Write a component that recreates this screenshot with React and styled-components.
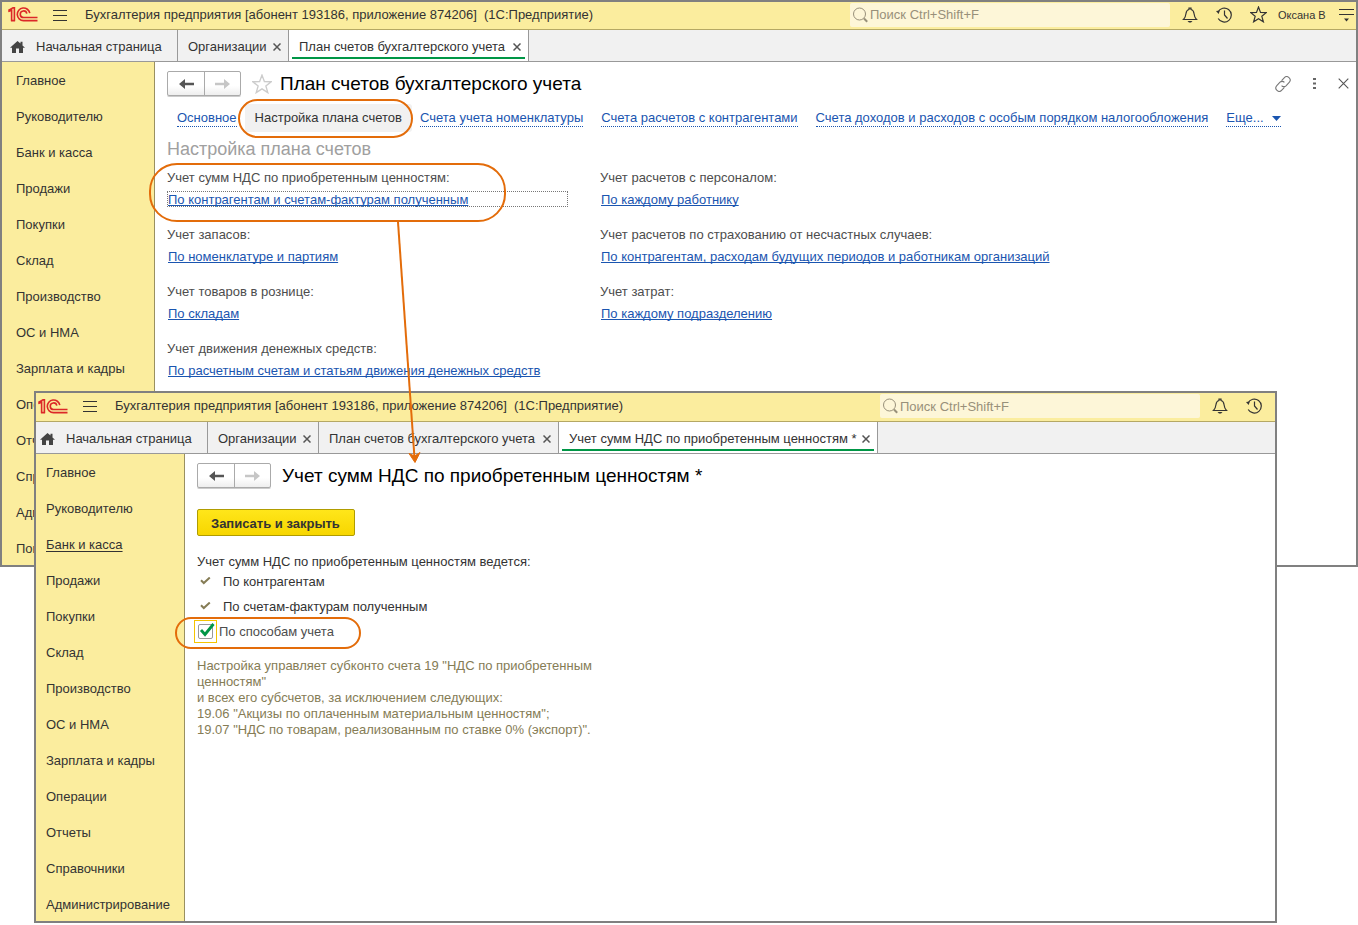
import React from "react";
import styled, { createGlobalStyle } from "styled-components";

const GlobalStyle = createGlobalStyle`
  *, *::before, *::after { box-sizing: border-box; }
  body {
    margin: 0;
    background: #fff;
    color: #333;
    font: 13px/16px "Liberation Sans", Arial, sans-serif;
  }
  button, input { font: inherit; color: inherit; }
  svg { display: block; flex: none; }
`;

const Desktop = styled.div`
  position: relative;
  min-height: 100vh;
  overflow: hidden;
`;

const Frame = styled.section`
  border: 2px solid #808080;
  background: #fff;
  ${(p) =>
    p.$front &&
    `
    position: absolute;
    top: 391px;
    left: 34px;
    right: 81px;
  `}
`;

const TitleBar = styled.header`
  display: flex;
  align-items: center;
  height: ${(p) => (p.$front ? 29 : 28)}px;
  padding: 0 ${(p) => (p.$front ? 4 : 2)}px 2px ${(p) => (p.$front ? 2 : 6)}px;
  background: #fbed9e;
  border-bottom: 1px solid #b5a864;
`;

const IconButton = styled.button`
  display: flex;
  align-items: center;
  justify-content: center;
  flex: none;
  width: ${(p) => p.$w || 34}px;
  height: 24px;
  padding: 0;
  border: 0;
  background: none;
  color: #333;
  cursor: pointer;
`;

const AppName = styled.div`
  margin-left: 3px;
  white-space: pre;
`;

const Search = styled.label`
  display: flex;
  align-items: center;
  gap: 2px;
  width: 320px;
  height: 24px;
  margin: 0 3px 0 auto;
  padding-left: 3px;
  border-radius: 2px;
  background: #fdf6d8;
  color: #98907a;
`;

const SearchInput = styled.input`
  flex: 1;
  min-width: 0;
  height: 22px;
  padding: 0;
  border: 0;
  outline: 0;
  background: none;
  &::placeholder { color: #98907a; opacity: 1; }
`;

const User = styled.button`
  width: 64px;
  padding: 0 0 0 3px;
  border: 0;
  background: none;
  font-size: 11px;
  text-align: left;
  white-space: nowrap;
`;

const TabBar = styled.nav`
  display: flex;
  height: 32px;
  background: #f1f1f1;
  border-bottom: 1px solid #999;
`;

const Tab = styled.div`
  position: relative;
  display: flex;
  align-items: center;
  justify-content: space-between;
  flex: none;
  width: ${(p) => p.$w}px;
  padding: 2px 6px 0 ${(p) => p.$pad || 10}px;
  border-right: 1px solid #999;
  background: ${(p) => (p.$active ? "#fff" : "none")};
  &::after {
    content: "";
    display: ${(p) => (p.$active ? "block" : "none")};
    position: absolute;
    left: 3px;
    right: 3px;
    bottom: 2px;
    height: 2px;
    background: #009646;
  }
`;

const TabLabel = styled.button`
  display: flex;
  align-items: center;
  gap: 11px;
  padding: 0;
  border: 0;
  background: none;
  white-space: nowrap;
  cursor: pointer;
`;

const CloseButton = styled(TabLabel)`
  width: 11px;
  height: 16px;
  justify-content: center;
`;

const Body = styled.div`
  display: flex;
`;

const Sidebar = styled.nav`
  flex: none;
  width: ${(p) => (p.$front ? 149 : 153)}px;
  border-right: 1px solid #9a9060;
  background: #fbed9e;
`;

const Sections = styled.ul`
  margin: 0 0 -1px;
  padding: 0 0 0 ${(p) => (p.$front ? 10 : 14)}px;
  list-style: none;
`;

const Section = styled.li`
  display: flex;
  align-items: center;
  height: 36px;
  padding-top: 2px;
  a {
    color: #333;
    text-decoration: ${(p) => (p.$hover ? "underline" : "none")};
    text-decoration-skip-ink: none;
    text-underline-offset: 2px;
    white-space: nowrap;
  }
`;

const Main = styled.main`
  flex: 1;
  min-width: 0;
  padding: 9px 7px 0 12px;
`;

const Heading = styled.div`
  display: flex;
  align-items: center;
  height: 25px;
`;

const History = styled.div`
  display: flex;
  flex: none;
  height: 25px;
  border: 1px solid #aaa;
  border-radius: 2px;
  background: linear-gradient(#fff 60%, #eee);
  box-shadow: 0 1px 0 #ccc;
`;

const HistoryButton = styled.button`
  display: flex;
  align-items: center;
  justify-content: center;
  width: ${(p) => (p.$back ? 37 : 35)}px;
  padding: 0;
  border: 0;
  border-right: ${(p) => (p.$back ? "1px solid #aaa" : "0")};
  background: none;
  color: ${(p) => (p.$back ? "#555" : "#c6c6c6")};
`;

const Favorite = styled(IconButton)`
  width: 39px;
  padding-left: 2px;
`;

const Title = styled.h1`
  margin: 0 0 0 ${(p) => (p.$front ? 11 : 0)}px;
  color: #000;
  font-size: 19px;
  line-height: 24px;
  font-weight: 400;
  white-space: nowrap;
`;

const Tools = styled.div`
  display: flex;
  align-items: center;
  gap: 22px;
  margin-left: auto;
`;

const Links = styled.nav`
  display: flex;
  align-items: center;
  gap: 18px;
  height: 28px;
  margin: 8px 0 5px;
  padding-left: 10px;
`;

const NavLink = styled.a`
  padding-top: 1px;
  border-bottom: 1px dotted #1a55b0;
  color: #1a55b0;
  text-decoration: none;
  white-space: nowrap;
`;

const MoreLink = styled(NavLink)`
  display: flex;
  align-items: center;
  gap: 8px;
`;

const CurrentLink = styled.a`
  position: relative;
  margin: 0 -10px;
  padding: 6px 10px;
  border-radius: 3px;
  background: #f1f1f1;
  color: #333;
  text-decoration: none;
  white-space: nowrap;
`;

const Callout = styled.span`
  position: absolute;
  inset: ${(p) => p.$inset};
  border: 2px solid #e36c0a;
  border-radius: ${(p) => p.$radius}px;
  pointer-events: none;
`;

const SubTitle = styled.h2`
  margin: 0 0 9px;
  color: #a0a0a0;
  font-size: 18px;
  line-height: 24px;
  font-weight: 400;
`;

const Settings = styled.dl`
  display: grid;
  grid-template-columns: 433px 1fr;
  row-gap: 20px;
  margin: 0;
`;

const Setting = styled.div`
  position: relative;
  display: grid;
  row-gap: 5px;
  dt { color: #4d4d4d; }
  dd { margin: 0; }
`;

const SettingLink = styled.a`
  display: block;
  width: ${(p) => (p.$focused ? "401px" : "auto")};
  height: 16px;
  padding-left: 1px;
  line-height: 18px;
  color: #1a55b0;
  text-decoration: underline;
  text-decoration-skip-ink: none;
  outline: ${(p) => (p.$focused ? "1px dotted #777" : "0")};
  outline-offset: -1px;
`;

const SaveButton = styled.button`
  display: block;
  height: 27px;
  margin: 21px 0 18px;
  padding: 2px 14px 0 13px;
  border: 1px solid #b09c00;
  border-radius: 2px;
  background: linear-gradient(#ffe61a, #f7d600);
  color: #333;
  font-weight: 700;
`;

const Group = styled.fieldset`
  margin: 0 0 14px;
  padding: 0;
  border: 0;
  legend {
    margin-bottom: -1px;
    padding: 0;
  }
`;

const Fixed = styled.div`
  display: flex;
  align-items: center;
  gap: 12px;
  height: 25px;
  padding-left: 3px;
`;

const Option = styled.label`
  position: relative;
  display: flex;
  align-items: center;
  gap: 6px;
  width: 164px;
  height: 25px;
  padding-left: 1px;
  color: #4d4d4d;
`;

const CheckWrap = styled.span`
  position: relative;
  width: 15px;
  height: 15px;
  outline: 1px solid #f5c400;
  outline-offset: 3px;
  svg {
    position: absolute;
    left: 0;
    bottom: 0;
    pointer-events: none;
  }
  input:not(:checked) + svg { display: none; }
`;

const Check = styled.input`
  display: block;
  appearance: none;
  width: 15px;
  height: 15px;
  margin: 0;
  border: 1px solid #999;
  border-radius: 2px;
  background: #fff;
  outline: 0;
`;

const Note = styled.p`
  width: 400px;
  margin: 0;
  color: #857c55;
`;

const Pointer = styled.svg`
  position: absolute;
  left: 390px;
  top: 222px;
  pointer-events: none;
`;

const Logo = () => (
  <svg width="30" height="15" viewBox="0 0 30 15" fill="none" stroke="#dc2828" strokeWidth="1.6" role="img" aria-label="1С">
    <path d="M0.3 4.6 L3.6 3.2 V14.2 M0.3 3.4 L5 0.9 H6.4 V14.2 M3 13.6 H7" />
    <path d="M21.8 6.2 A6.3 6.3 0 1 0 15.5 13.6 H29.5" />
    <path d="M18.8 6.6 A3.3 3.3 0 1 0 15.5 10.5 H29.5" />
  </svg>
);

const MenuIcon = () => (
  <svg width="14" height="12" viewBox="0 0 14 12" stroke="#333">
    <path d="M0 1.5H14M0 6.5H14M0 11.5H14" />
  </svg>
);

const SearchIcon = () => (
  <svg width="15" height="16" viewBox="0 0 15 16" fill="none" stroke="currentColor">
    <circle cx="6.5" cy="7" r="6" />
    <path d="M11 11.5 L14.2 14.7" strokeWidth="2" />
  </svg>
);

const BellIcon = () => (
  <svg width="16" height="16" viewBox="0 0 16 16" fill="none" stroke="currentColor">
    <path d="M1.5 12.5 C3.5 10.5 3.7 9 4 6.5 C4.3 4 5.5 2.8 7 2.5 V1.2 H9 V2.5 C10.5 2.8 11.7 4 12 6.5 C12.3 9 12.5 10.5 14.5 12.5 Z" strokeWidth="1.2" />
    <path d="M5.5 14 H10.5 L9 15.6 H7 Z" fill="currentColor" stroke="none" />
  </svg>
);

const ClockIcon = () => (
  <svg width="16" height="16" viewBox="0 0 16 16" fill="none" stroke="currentColor" strokeWidth="1.2">
    <path d="M2 5 A7 7 0 1 1 2.2 11.5" />
    <path d="M8.5 3.5 V8 L11.5 11.5" />
    <path d="M0 4 L3.8 3.6 L2.6 7 Z" fill="currentColor" stroke="none" />
  </svg>
);

const StarIcon = ({ size = 17, color = "#333" }) => (
  <svg width={size} height={size} viewBox="0 0 16 16" fill="none" stroke={color} strokeWidth="1.1">
    <path d="M8 0.9 L9.9 6 L15.3 6.2 L11.1 9.6 L12.6 14.9 L8 11.9 L3.4 14.9 L4.9 9.6 L0.7 6.2 L6.1 6 Z" />
  </svg>
);

const FunctionsIcon = () => (
  <svg width="15" height="14" viewBox="0 0 15 14" stroke="#333">
    <path d="M0 1.5H15M0 6.5H15" />
    <path d="M5 10.5H10L7.5 13.5Z" fill="#333" stroke="none" />
  </svg>
);

const HomeIcon = () => (
  <svg width="15" height="12" viewBox="0 0 15 12" fill="#444">
    <path d="M7.5 0 L10.5 2.6 V0.8 H12.5 V4.4 L15 6.8 H13 V12 H9 V7.5 H6 V12 H2 V6.8 H0 Z" />
  </svg>
);

const CrossIcon = ({ size = 8, w = 1.5 }) => (
  <svg width={size} height={size} viewBox="0 0 8 8" stroke="#555" strokeWidth={w}>
    <path d="M0.5 0.5L7.5 7.5M7.5 0.5L0.5 7.5" />
  </svg>
);

const ArrowIcon = ({ flip }) => (
  <svg width="15" height="10" viewBox="0 0 15 10" fill="currentColor">
    <path d={flip ? "M15 5 L9 0 V3.8 H0 V6.2 H9 V10 Z" : "M0 5 L6 0 V3.8 H15 V6.2 H6 V10 Z"} />
  </svg>
);

const ChainIcon = () => (
  <svg width="16" height="16" viewBox="0 0 16 16" fill="none" stroke="#777" strokeWidth="1.1">
    <path d="M6.6 4.6 L9.2 1.8 A3 3 0 0 1 14.2 6.4 L11 9.8 A3 3 0 0 1 6.6 9.6" />
    <path d="M9.4 11.4 L6.8 14.2 A3 3 0 0 1 1.8 9.6 L5 6.2 A3 3 0 0 1 9.4 6.4" />
  </svg>
);

const DotsIcon = () => (
  <svg width="3" height="11" viewBox="0 0 3 11" fill="#666">
    <path d="M0 0H3V2H0ZM0 4.5H3V6.5H0ZM0 9H3V11H0Z" />
  </svg>
);

const TickIcon = () => (
  <svg width="11" height="9" viewBox="0 0 11 9" fill="none" stroke="#857c55" strokeWidth="2">
    <path d="M1 3.2 L3.8 6 L9.8 0.5" />
  </svg>
);

const SECTIONS = [
  "Главное",
  "Руководителю",
  "Банк и касса",
  "Продажи",
  "Покупки",
  "Склад",
  "Производство",
  "ОС и НМА",
  "Зарплата и кадры",
  "Операции",
  "Отчеты",
  "Справочники",
  "Администрирование",
];

const SETTINGS = [
  ["Учет сумм НДС по приобретенным ценностям:", "По контрагентам и счетам-фактурам полученным"],
  ["Учет расчетов с персоналом:", "По каждому работнику"],
  ["Учет запасов:", "По номенклатуре и партиям"],
  ["Учет расчетов по страхованию от несчастных случаев:", "По контрагентам, расходам будущих периодов и работникам организаций"],
  ["Учет товаров в рознице:", "По складам"],
  ["Учет затрат:", "По каждому подразделению"],
  ["Учет движения денежных средств:", "По расчетным счетам и статьям движения денежных средств"],
];

function AppBar({ front }) {
  return (
    <TitleBar $front={front}>
      <Logo />
      <IconButton $w={44} aria-label="Меню">
        <MenuIcon />
      </IconButton>
      <AppName>
        {"Бухгалтерия предприятия [абонент 193186, приложение 874206]  (1С:Предприятие)"}
      </AppName>
      <Search>
        <SearchIcon />
        <SearchInput type="text" placeholder="Поиск Ctrl+Shift+F" aria-label="Поиск" />
      </Search>
      <IconButton aria-label="Уведомления">
        <BellIcon />
      </IconButton>
      <IconButton aria-label="История">
        <ClockIcon />
      </IconButton>
      {!front && (
        <>
          <IconButton aria-label="Избранное">
            <StarIcon />
          </IconButton>
          <User>Оксана В</User>
          <IconButton $w={15} aria-label="Сервис">
            <FunctionsIcon />
          </IconButton>
        </>
      )}
    </TitleBar>
  );
}

function Tabs({ front, items }) {
  return (
    <TabBar>
      <Tab $w={front ? 172 : 176} $pad={front ? 4 : 8}>
        <TabLabel>
          <HomeIcon />
          Начальная страница
        </TabLabel>
      </Tab>
      {items.map(([label, width], i) => (
        <Tab key={label} $w={width} $active={i === items.length - 1}>
          <TabLabel>{label}</TabLabel>
          <CloseButton aria-label={`Закрыть ${label}`}>
            <CrossIcon />
          </CloseButton>
        </Tab>
      ))}
    </TabBar>
  );
}

function SectionPanel({ front, items, hovered }) {
  return (
    <Sidebar $front={front}>
      <Sections $front={front}>
        {items.map((s) => (
          <Section key={s} $hover={s === hovered}>
            <a href="#">{s}</a>
          </Section>
        ))}
      </Sections>
    </Sidebar>
  );
}

const BackForward = () => (
  <History>
    <HistoryButton $back aria-label="Назад">
      <ArrowIcon />
    </HistoryButton>
    <HistoryButton aria-label="Вперед">
      <ArrowIcon flip />
    </HistoryButton>
  </History>
);

function AccountsWindow() {
  return (
    <Frame>
      <AppBar />
      <Tabs items={[["Организации", 111], ["План счетов бухгалтерского учета", 240]]} />
      <Body>
        <SectionPanel items={[...SECTIONS, "Помощь"]} />
        <Main>
          <Heading>
            <BackForward />
            <Favorite aria-label="В избранное">
              <StarIcon size={20} color="#ccc" />
            </Favorite>
            <Title>План счетов бухгалтерского учета</Title>
            <Tools>
              <IconButton $w={16} aria-label="Ссылка">
                <ChainIcon />
              </IconButton>
              <IconButton $w={3} aria-label="Еще">
                <DotsIcon />
              </IconButton>
              <IconButton $w={11} aria-label="Закрыть">
                <CrossIcon size={11} w={0.8} />
              </IconButton>
            </Tools>
          </Heading>
          <Links>
            <NavLink href="#">Основное</NavLink>
            <CurrentLink href="#">
              Настройка плана счетов
              <Callout $inset="-5px -1px -6px -7px" $radius={20} />
            </CurrentLink>
            <NavLink href="#">Счета учета номенклатуры</NavLink>
            <NavLink href="#">Счета расчетов с контрагентами</NavLink>
            <NavLink href="#">Счета доходов и расходов с особым порядком налогообложения</NavLink>
            <MoreLink href="#">
              Еще...
              <svg width="9" height="5" viewBox="0 0 9 5" fill="#1a55b0">
                <path d="M0 0H9L4.5 5Z" />
              </svg>
            </MoreLink>
          </Links>
          <SubTitle>Настройка плана счетов</SubTitle>
          <Settings>
            {SETTINGS.map(([label, value], i) => (
              <Setting key={label}>
                <dt>{label}</dt>
                <dd>
                  <SettingLink href="#" $focused={i === 0}>
                    {value}
                  </SettingLink>
                </dd>
                {i === 0 && <Callout $inset="-7px 94px -15px -18px" $radius={28} />}
              </Setting>
            ))}
          </Settings>
        </Main>
      </Body>
    </Frame>
  );
}

function VatWindow() {
  return (
    <Frame $front>
      <AppBar front />
      <Tabs
        front
        items={[
          ["Организации", 111],
          ["План счетов бухгалтерского учета", 240],
          ["Учет сумм НДС по приобретенным ценностям *", 319],
        ]}
      />
      <Body>
        <SectionPanel front items={SECTIONS} hovered="Банк и касса" />
        <Main>
          <Heading>
            <BackForward />
            <Title $front>Учет сумм НДС по приобретенным ценностям *</Title>
          </Heading>
          <SaveButton>Записать и закрыть</SaveButton>
          <Group>
            <legend>Учет сумм НДС по приобретенным ценностям ведется:</legend>
            <Fixed>
              <TickIcon />
              По контрагентам
            </Fixed>
            <Fixed>
              <TickIcon />
              По счетам-фактурам полученным
            </Fixed>
            <Option>
              <CheckWrap>
                <Check type="checkbox" defaultChecked />
                <svg width="17" height="17" viewBox="0 0 17 17" fill="none" stroke="#009646" strokeWidth="2.8">
                  <path d="M3 8 L7 12.5 L15.5 2" />
                </svg>
              </CheckWrap>
              По способам учета
              <Callout $inset="-2px 0 -5px -22px" $radius={22} />
            </Option>
          </Group>
          <Note>
            Настройка управляет субконто счета 19 "НДС по приобретенным ценностям"
            <br />
            и всех его субсчетов, за исключением следующих:
            <br />
            19.06 "Акцизы по оплаченным материальным ценностям";
            <br />
            19.07 "НДС по товарам, реализованным по ставке 0% (экспорт)".
          </Note>
        </Main>
      </Body>
    </Frame>
  );
}

export default function App() {
  return (
    <>
      <GlobalStyle />
      <Desktop>
        <AccountsWindow />
        <VatWindow />
        <Pointer width="36" height="242" viewBox="0 0 36 242" fill="none" stroke="#e36c0a" strokeWidth="2">
          <path d="M8 0 L24.5 236" />
          <path d="M19 231.5 L25 240.5 L30 230.5 L24.6 234 Z" fill="#e36c0a" strokeWidth="1" />
        </Pointer>
      </Desktop>
    </>
  );
}
